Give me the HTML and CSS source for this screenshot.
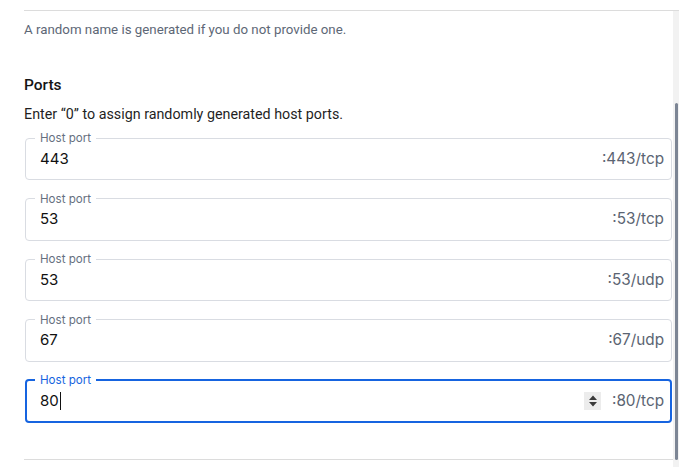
FILE: index.html
```html
<!DOCTYPE html>
<html lang="en">

<head>
    <meta charset="UTF-8">
    <title>Ports</title>
    <link rel="stylesheet" href="styles.css">
</head>

<body>
    <div class="panel">
        <div class="content">
            <p class="hint">A random name is generated if you do not provide one.</p>
            <h2>Ports</h2>
            <p class="note">Enter “0” to assign randomly generated host ports.</p>

            <fieldset class="port">
                <legend>Host port</legend>
                <div class="row">
                    <span class="value">443</span>
                    <span class="suffix">:443/tcp</span>
                </div>
            </fieldset>
            <fieldset class="port">
                <legend>Host port</legend>
                <div class="row">
                    <span class="value">53</span>
                    <span class="suffix">:53/tcp</span>
                </div>
            </fieldset>
            <fieldset class="port">
                <legend>Host port</legend>
                <div class="row">
                    <span class="value">53</span>
                    <span class="suffix">:53/udp</span>
                </div>
            </fieldset>
            <fieldset class="port">
                <legend>Host port</legend>
                <div class="row">
                    <span class="value">67</span>
                    <span class="suffix">:67/udp</span>
                </div>
            </fieldset>
            <fieldset class="port focused">
                <legend>Host port</legend>
                <div class="row">
                    <span class="value">80<span class="caret"></span></span>
                    <span class="spin">
                        <svg width="12" height="16" viewBox="0 0 12 16">
                            <path d="M6 2.5 L10 7 H2 Z M6 13.5 L10 9 H2 Z" fill="#3a3a3a"/>
                        </svg>
                    </span>
                    <span class="suffix">:80/tcp</span>
                </div>
            </fieldset>
            <div class="spacer"></div>
        </div>
        <div class="scrollbar">
            <div class="thumb"></div>
        </div>
    </div>
</body>

</html>
```

FILE: styles.css
```css
* {
    margin: 0;
    padding: 0;
    box-sizing: border-box;
}

body {
    font-family: Roboto, "Liberation Sans", sans-serif;
    background: #fff;
    color: #1d1d1f;
}

.panel {
    margin: 10px 11px 0 24px;
    border-top: 1px solid #dcdcdc;
    display: flex;
    height: 457px;
}

.content {
    flex: 1;
    display: flex;
    flex-direction: column;
}

.hint {
    margin-top: 9px;
    font-size: 13.3px;
    line-height: 20px;
    color: #5d6776;
}

h2 {
    margin-top: 35px;
    font-size: 15.5px;
    font-weight: 500;
    line-height: 20px;
    color: #151515;
}

.note {
    margin-top: 9px;
    font-size: 14.3px;
    line-height: 20px;
    color: #1f1f1f;
}

.port {
    margin: 7px 1px 4.5px 1px;
    border: 1px solid #d9dce2;
    border-radius: 4px;
    padding: 0 7px 8px 9px;
    font-family: Inter, Roboto, sans-serif;
}

.port legend {
    font-size: 11.6px;
    line-height: 14px;
    padding: 0 5px;
    color: #66707f;
}

.row {
    display: flex;
    align-items: center;
    height: 26px;
}

.value {
    flex: 1;
    padding-left: 5px;
    font-size: 15px;
    color: #111;
    display: flex;
    align-items: center;
}

.suffix {
    font-size: 15.3px;
    color: #5b6472;
}

.caret {
    display: inline-block;
    width: 1px;
    height: 18px;
    margin-left: 1px;
    background: #111;
}

.focused {
    border: 2px solid #1664e0;
    padding: 0 6px 7px 8px;
}

.focused legend {
    color: #1664e0;
}

.focused .row {
    height: 27px;
}

.spin {
    width: 17px;
    height: 18px;
    margin-right: 11px;
    background: #ececec;
    display: flex;
    align-items: center;
    justify-content: center;
}

.spacer {
    flex: 1;
    border-bottom: 1px solid #dcdcdc;
    margin-bottom: 7px;
}

.scrollbar {
    width: 6px;
    background: #f2f2f2;
    display: flex;
    justify-content: center;
}

.thumb {
    width: 3px;
    margin-top: 92px;
    height: 357px;
    background: #7c8594;
    border-radius: 2px;
}
```
